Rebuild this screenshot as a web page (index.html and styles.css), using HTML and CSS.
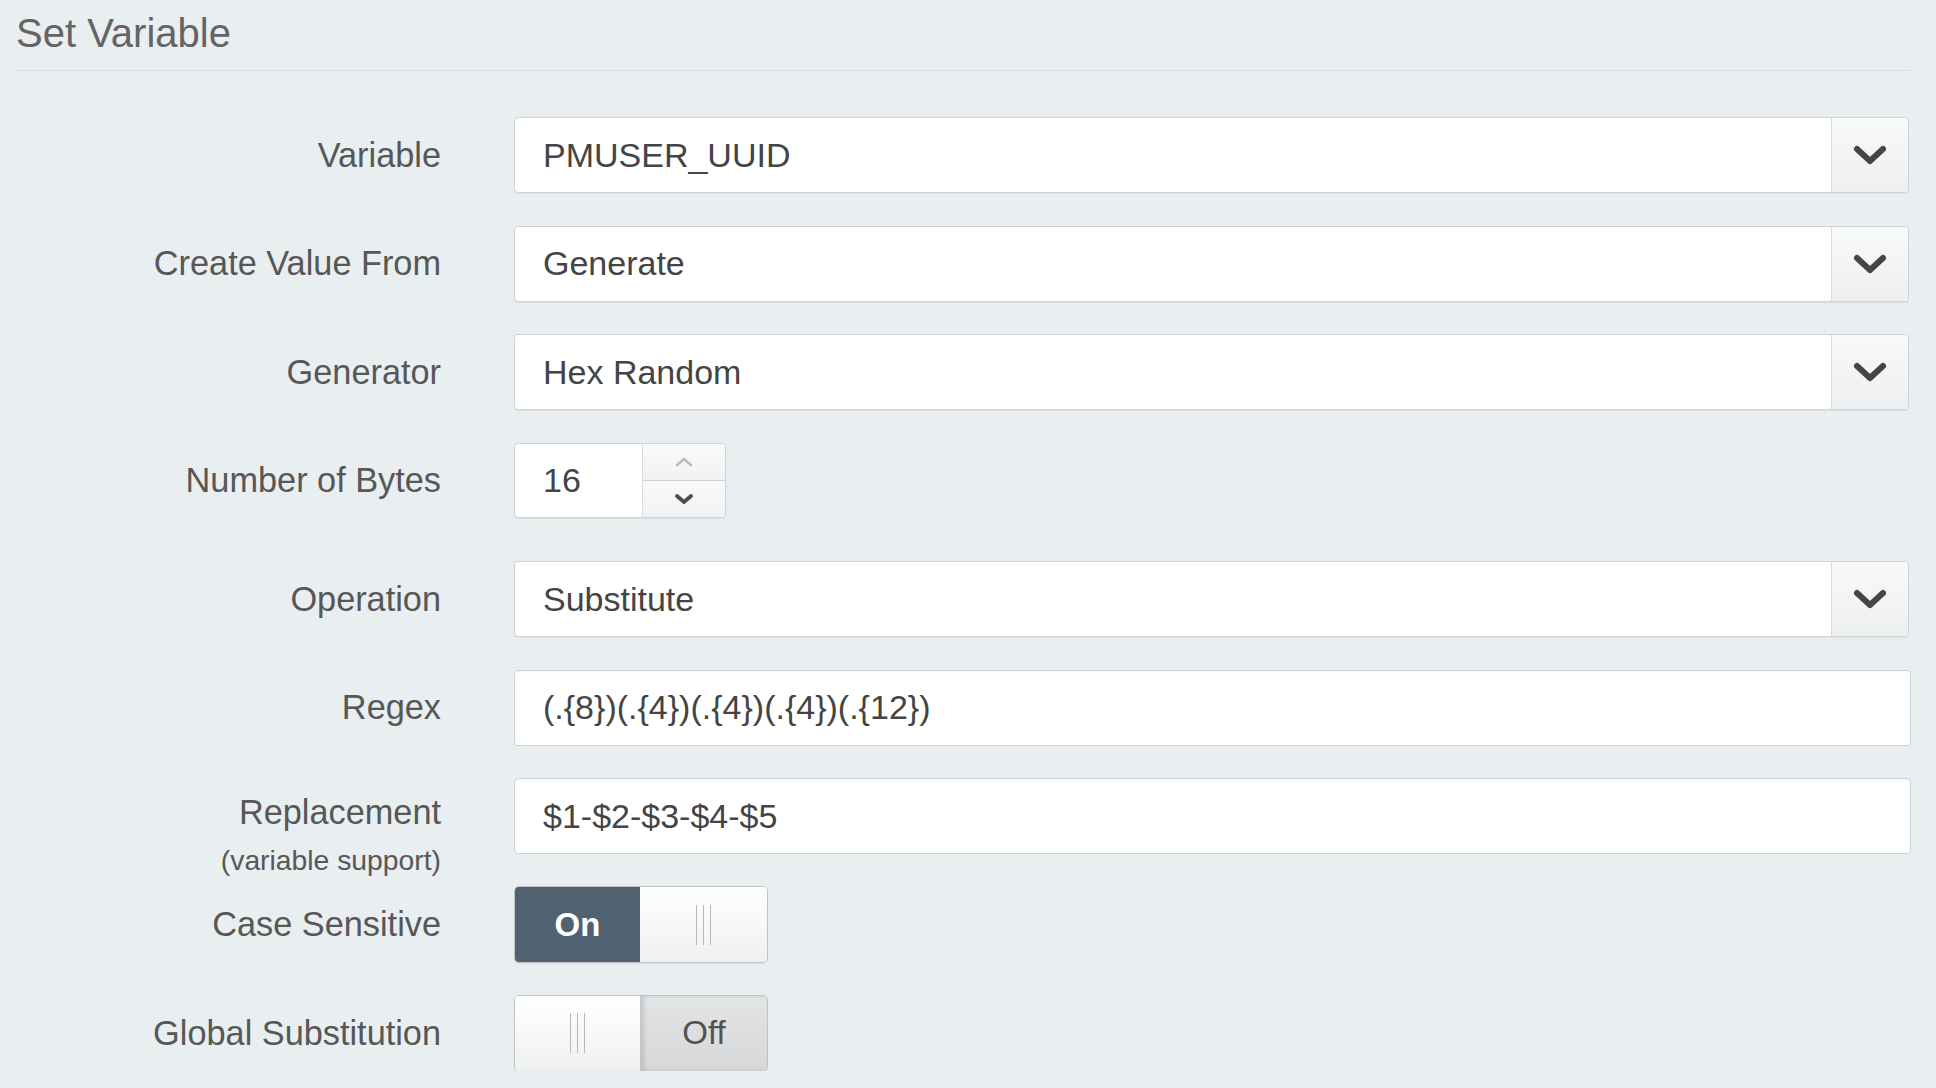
FILE: index.html
```html
<!DOCTYPE html>
<html lang="en">
<head>
  <meta charset="UTF-8">
  <title>Set Variable</title>
  <link rel="stylesheet" href="styles.css">
</head>
<body>

  <div class="panel">
    <h2 class="panel-title">Set Variable</h2>

    <div class="form">
      <div class="row">
        <label class="label">Variable</label>
        <div class="select">
          <div class="select-value">PMUSER_UUID</div>
          <div class="select-btn">
            <svg width="36" height="22" viewBox="0 0 36 22"><polyline points="5,5 18,17 31,5" fill="none" stroke="#454545" stroke-width="6" stroke-linejoin="round" stroke-linecap="round"/></svg>
          </div>
        </div>
      </div>

      <div class="row">
        <label class="label">Create Value From</label>
        <div class="select">
          <div class="select-value">Generate</div>
          <div class="select-btn">
            <svg width="36" height="22" viewBox="0 0 36 22"><polyline points="5,5 18,17 31,5" fill="none" stroke="#454545" stroke-width="6" stroke-linejoin="round" stroke-linecap="round"/></svg>
          </div>
        </div>
      </div>

      <div class="row">
        <label class="label">Generator</label>
        <div class="select">
          <div class="select-value">Hex Random</div>
          <div class="select-btn">
            <svg width="36" height="22" viewBox="0 0 36 22"><polyline points="5,5 18,17 31,5" fill="none" stroke="#454545" stroke-width="6" stroke-linejoin="round" stroke-linecap="round"/></svg>
          </div>
        </div>
      </div>

      <div class="row row-number">
        <label class="label">Number of Bytes</label>
        <div class="number">
          <div class="number-value">16</div>
          <div class="spinner">
            <div class="spin spin-up">
              <svg width="20" height="12" viewBox="0 0 20 12"><polyline points="3,9 10,3 17,9" fill="none" stroke="#bcbcbc" stroke-width="2.6" stroke-linecap="round" stroke-linejoin="round"/></svg>
            </div>
            <div class="spin spin-down">
              <svg width="20" height="12" viewBox="0 0 20 12"><polyline points="3,3 10,9 17,3" fill="none" stroke="#4d4d4d" stroke-width="3.8" stroke-linecap="round" stroke-linejoin="round"/></svg>
            </div>
          </div>
        </div>
      </div>

      <div class="row">
        <label class="label">Operation</label>
        <div class="select">
          <div class="select-value">Substitute</div>
          <div class="select-btn">
            <svg width="36" height="22" viewBox="0 0 36 22"><polyline points="5,5 18,17 31,5" fill="none" stroke="#454545" stroke-width="6" stroke-linejoin="round" stroke-linecap="round"/></svg>
          </div>
        </div>
      </div>

      <div class="row">
        <label class="label">Regex</label>
        <div class="text-input">(.{8})(.{4})(.{4})(.{4})(.{12})</div>
      </div>

      <div class="row row-top">
        <label class="label label-stack">
          <span class="label-main">Replacement</span>
          <span class="label-sub">(variable support)</span>
        </label>
        <div class="text-input">$1-$2-$3-$4-$5</div>
      </div>

      <div class="row">
        <label class="label">Case Sensitive</label>
        <div class="toggle">
          <div class="toggle-on">On</div>
          <div class="toggle-handle"><span></span><span></span><span></span></div>
        </div>
      </div>

      <div class="row">
        <label class="label">Global Substitution</label>
        <div class="toggle">
          <div class="toggle-handle"><span></span><span></span><span></span></div>
          <div class="toggle-off">Off</div>
        </div>
      </div>
    </div>
  </div>

</body>
</html>
```

FILE: styles.css
```css
body {
  margin: 0;
  background-color: #e9eef1;
  font-family: "Liberation Sans", Arial, Helvetica, sans-serif;
  color: #585858;
  overflow: hidden;
}
.panel {
  padding: 0 25px 0 16px;
}
.panel-title {
  margin: 0;
  padding: 11px 0 15px;
  font-size: 40px;
  line-height: 44px;
  font-weight: normal;
  color: #646464;
  border-bottom: 1px solid #d7dde1;
}
.form {
  display: flex;
  flex-direction: column;
  gap: 32.5px;
  padding-top: 46px;
}
.row {
  display: flex;
  align-items: center;
  height: 76px;
}
.row-number {
  margin-bottom: 10px;
}
.row-top {
  align-items: flex-start;
}
.label {
  flex: 0 0 425px;
  margin-right: 73px;
  text-align: right;
  font-size: 34.3px;
  color: #575757;
}
.label-stack {
  display: flex;
  flex-direction: column;
  align-items: flex-end;
}
.label-main {
  line-height: 68px;
}
.label-sub {
  font-size: 28.3px;
  line-height: 28px;
}
.select {
  flex: 1;
  display: flex;
  height: 76px;
  margin-right: 2px;
  box-sizing: border-box;
  background: #fff;
  border: 1px solid #cfd3d6;
  border-radius: 4px;
  box-shadow: 0 1px 1px rgba(0, 0, 0, 0.06);
}
.select-value {
  flex: 1;
  display: flex;
  align-items: center;
  padding-left: 28px;
  font-size: 34px;
  color: #444;
}
.select-btn {
  flex: 0 0 76px;
  display: flex;
  align-items: center;
  justify-content: center;
  border-left: 1px solid #d8dbde;
  background: linear-gradient(#f8f9f9, #eeeff0);
  border-radius: 0 4px 4px 0;
}
.text-input {
  flex: 1;
  display: flex;
  align-items: center;
  height: 76px;
  box-sizing: border-box;
  padding-left: 28px;
  background: #fff;
  border: 1px solid #cfd3d6;
  border-radius: 4px;
  box-shadow: inset 0 1px 2px rgba(0, 0, 0, 0.05);
  font-size: 34px;
  color: #444;
}
.number {
  display: flex;
  width: 212px;
  height: 75px;
  box-sizing: border-box;
  background: #fff;
  border: 1px solid #cfd3d6;
  border-radius: 4px;
  box-shadow: 0 1px 1px rgba(0, 0, 0, 0.06);
}
.number-value {
  flex: 1;
  display: flex;
  align-items: center;
  padding-left: 28px;
  font-size: 34px;
  color: #444;
}
.spinner {
  flex: 0 0 82px;
  display: flex;
  flex-direction: column;
  border-left: 1px solid #d8dbde;
}
.spin {
  flex: 1;
  display: flex;
  align-items: center;
  justify-content: center;
  background: linear-gradient(#fafafa, #f1f2f3);
}
.spin-up {
  border-bottom: 1px solid #cdd1d4;
  border-radius: 0 4px 0 0;
}
.spin-down {
  border-radius: 0 0 4px 0;
}
.toggle {
  display: flex;
  width: 254px;
  height: 77px;
  box-sizing: border-box;
  border: 1px solid #bfc3c6;
  border-radius: 5px;
  overflow: hidden;
  box-shadow: 0 1px 1px rgba(0, 0, 0, 0.06);
}
.toggle-on {
  flex: 0 0 125px;
  display: flex;
  align-items: center;
  justify-content: center;
  background: #506172;
  color: #fff;
  font-size: 33px;
  font-weight: bold;
}
.toggle-off {
  flex: 1;
  display: flex;
  align-items: center;
  justify-content: center;
  background: linear-gradient(#e3e4e5, #d6d7d8);
  box-shadow: inset 3px 0 4px rgba(0, 0, 0, 0.12);
  color: #525252;
  font-size: 33px;
}
.toggle-handle {
  flex: 1;
  display: flex;
  align-items: center;
  justify-content: center;
  gap: 6px;
  background: linear-gradient(#ffffff, #eff0f1);
}
.toggle-handle span {
  width: 1px;
  height: 40px;
  background: #b6b9bc;
}
.toggle .toggle-handle:first-child {
  flex: 0 0 125px;
  border-right: 1px solid #c4c8cb;
}
```
